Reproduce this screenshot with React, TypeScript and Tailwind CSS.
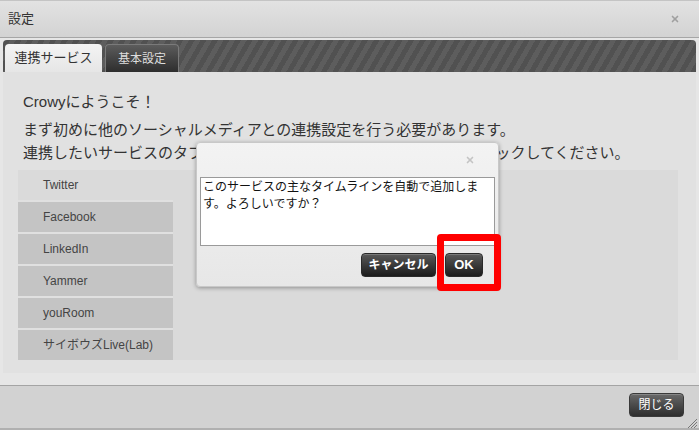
import React from "react";
import { X } from "lucide-react";

const services = ["Twitter", "Facebook", "LinkedIn", "Yammer", "youRoom", "サイボウズLive(Lab)"];

const font = "font-['Liberation_Sans','Noto_Sans_CJK_JP',sans-serif]";

function DarkButton({ label, className }: { label: string; className: string }) {
  return (
    <div
      className={`flex items-center justify-center rounded-[4px] border border-[#2a2a2a] bg-gradient-to-b from-[#5a5a5a] via-[#3a3a3a] to-[#1c1c1c] text-[12px] font-bold text-white shadow-[inset_0_1px_0_rgba(255,255,255,0.2)] ${className}`}
    >
      {label}
    </div>
  );
}

export default function App() {
  return (
    <div className={`relative flex h-[430px] w-[699px] flex-col overflow-hidden bg-[#e6e6e6] ${font}`}>
      {/* title bar */}
      <div className="flex h-[38px] items-center justify-between border-t border-b border-t-[#c4c4c4] border-b-[#a6a6a6] bg-gradient-to-b from-[#e2e2e2] to-[#d3d3d3] pl-[8px] pr-[19px]">
        <span className="text-[13px] text-[#333]">設定</span>
        <X className="h-[10px] w-[10px] text-[#a0a0a0]" strokeWidth={4} />
      </div>

      {/* panel */}
      <div className="flex flex-col px-[3px] pt-[2px]">
        <div className="flex h-[32px] items-end gap-[3px] rounded-[4px] rounded-b-none bg-[#555] bg-[repeating-linear-gradient(-60deg,#515151_0px,#515151_5px,#5d5d5d_5px,#5d5d5d_10px)] px-[2px]">
          <div className="flex h-[28px] w-[97px] items-center justify-center rounded-t-[4px] bg-gradient-to-b from-[#f4f4f4] to-[#e6e6e6] text-[13px] text-[#333]">
            連携サービス
          </div>
          <div className="flex h-[28px] w-[74px] items-center justify-center rounded-t-[4px] border border-b-0 border-[#7a7a7a] bg-gradient-to-b from-[#5c5c5c] to-[#2e2e2e] text-[12px] text-[#ddd]">
            基本設定
          </div>
        </div>

        <div className="h-[301px] bg-[#e1e1e1] px-[15px] pt-[18px]">
          <p className="pl-[5px] text-[15px] leading-[24px] text-[#333]">Crowyにようこそ！</p>
          <p className="mt-[4px] whitespace-nowrap pl-[5px] text-[15px] leading-[23px] text-[#333]">
            まず初めに他のソーシャルメディアとの連携設定を行う必要があります。
            <br />
            連携したいサービスのタブを選択し、「アカウント追加」ボタンをクリックしてください。
          </p>
          <div className="mt-[6px] flex h-[190px] w-[660px] bg-[#dadada]">
            <div className="flex w-[155px] flex-col gap-[2px] bg-[#e0e0e0]">
              {services.map((s, i) => (
                <div
                  key={s}
                  className={`flex h-[30px] items-center pl-[25px] text-[12px] text-[#444] ${i === 0 ? "bg-[#dadada]" : "bg-[#c4c4c4]"}`}
                >
                  {s}
                </div>
              ))}
            </div>
            <div className="flex-1" />
          </div>
        </div>
      </div>

      <div className="h-[12px]" />

      {/* footer */}
      <div className="flex flex-1 items-start justify-end border-t border-b-2 border-t-[#a4a4a4] border-b-[#b0b0b0] bg-[#d2d2d2] pr-[15px] pt-[7px]">
        <DarkButton label="閉じる" className="h-[24px] w-[55px] border-[#3a3a3a] from-[#6a6a6a] via-[#4a4a4a] to-[#2e2e2e] font-normal text-[#ddd]" />
      </div>

      {/* resize grip */}
      <svg className="absolute bottom-[2px] right-[2px]" width="10" height="10" viewBox="0 0 10 10">
        <path d="M1 10 L10 1 M4 10 L10 4 M7 10 L10 7" stroke="#777" strokeWidth="1" />
      </svg>

      {/* confirm modal */}
      <div className="absolute left-[196px] top-[142px] flex h-[145px] w-[303px] flex-col rounded-[4px] border border-[#c8c8c8] bg-gradient-to-b from-[#f3f3f3] to-[#e7e7e7] px-[3px] shadow-[0_1px_4px_rgba(0,0,0,0.35)]">
        <div className="flex h-[34px] items-center justify-end pr-[20px]">
          <X className="h-[10px] w-[10px] text-[#c4c4c4]" strokeWidth={4} />
        </div>
        <div className="h-[69px] border border-[#9a9a9a] bg-white px-[2px] pt-[1px] text-[12px] leading-[17px] text-[#111]">
          このサービスの主なタイムラインを自動で追加しま
          <br />
          す。よろしいですか？
        </div>
        <div className="mt-[7px] flex gap-[9px] pl-[161px]">
          <DarkButton label="キャンセル" className="h-[24px] w-[75px]" />
          <DarkButton label="OK" className="h-[24px] w-[38px] text-[13px]" />
        </div>
      </div>

      {/* red highlight */}
      <div className="absolute left-[437px] top-[234px] h-[57px] w-[64px] rounded-[4px] border-[7px] border-[#ff0000]" />
    </div>
  );
}
